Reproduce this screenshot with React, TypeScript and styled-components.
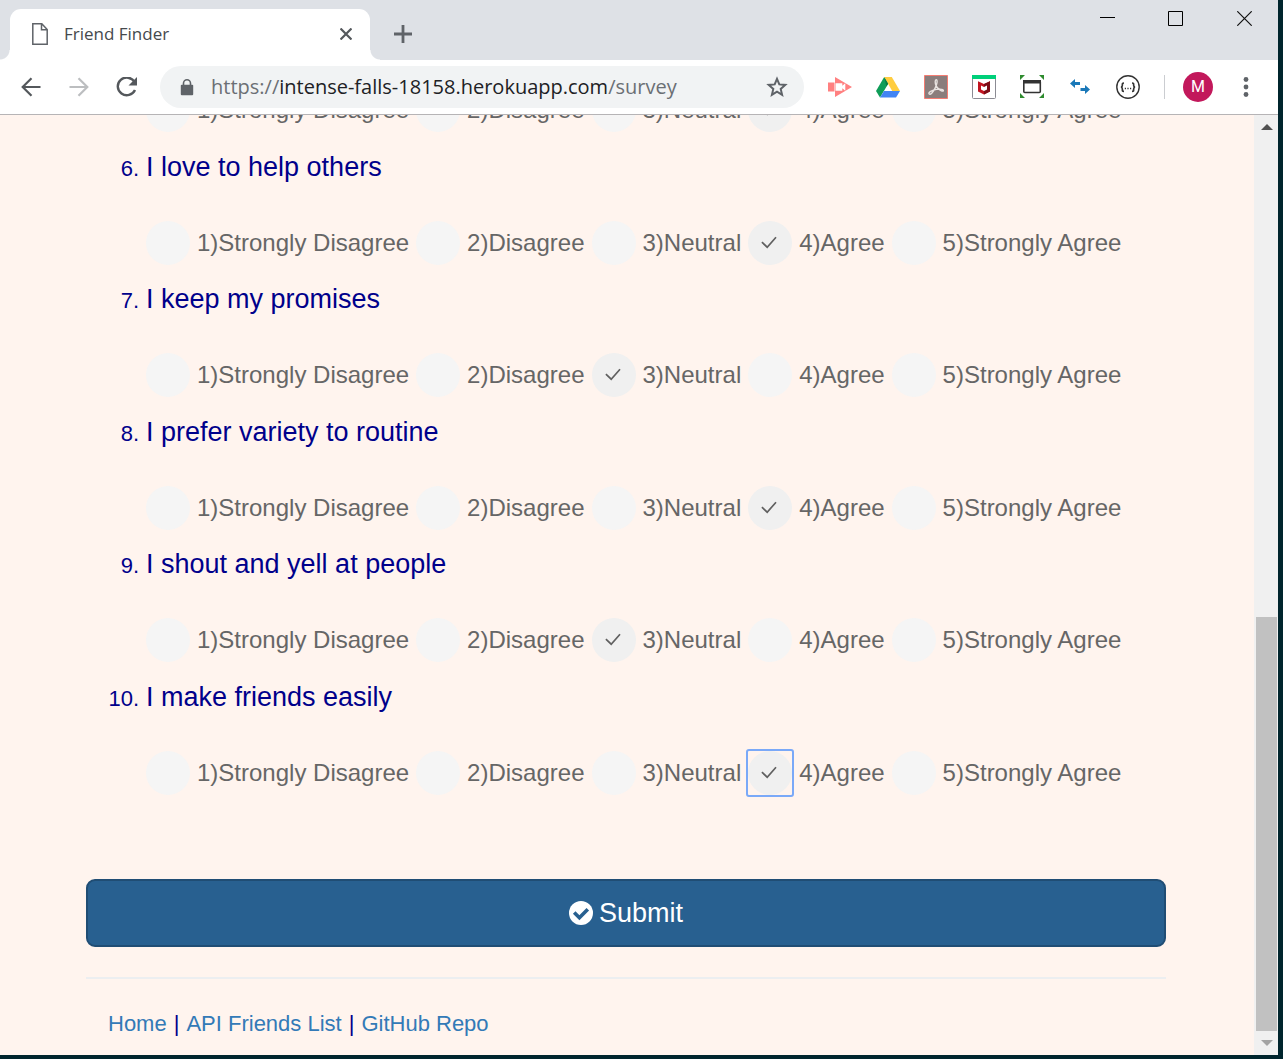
import React from "react";
import styled, { createGlobalStyle } from "styled-components";

const GlobalStyle = createGlobalStyle`
  * { box-sizing: border-box; }
  body { margin: 0; background: #00252d; }
  button { font: inherit; border: 0; padding: 0; background: none; cursor: pointer; }
  svg { display: block; }
`;

const uiFont = `"Open Sans", "Noto Sans", sans-serif`;
const pageFont = `"Liberation Sans", Arial, sans-serif`;

const BrowserWindow = styled.div`
  display: flex;
  flex-direction: column;
  height: 100vh;
  border-right: 5px solid #00252d;
  border-bottom: 4px solid #00252d;
  background: #fff;
`;

const TabStrip = styled.header`
  display: flex;
  flex: none;
  height: 60px;
  padding-left: 10px;
  background: #dee1e6;
`;

const Tab = styled.div`
  position: relative;
  display: flex;
  align-items: center;
  align-self: flex-end;
  width: 360px;
  height: 51px;
  padding: 0 14px 2px 22px;
  border-radius: 11px 11px 0 0;
  background: #fff;

  &::before,
  &::after {
    content: "";
    position: absolute;
    bottom: 0;
    width: 10px;
    height: 10px;
  }
  &::before {
    right: 100%;
    background: radial-gradient(circle at 0 0, #dee1e6 9px, #fff 10px);
  }
  &::after {
    left: 100%;
    background: radial-gradient(circle at 100% 0, #dee1e6 9px, #fff 10px);
  }
`;

const TabTitle = styled.span`
  flex: 1;
  padding-left: 16px;
  font: 17px/24px ${uiFont};
  color: #45494d;
`;

const IconButton = styled.button<{ $width?: number }>`
  display: flex;
  flex: none;
  align-items: center;
  justify-content: center;
  width: ${(p) => p.$width ?? 48}px;
`;

const NewTab = styled(IconButton)`
  margin: 8px 0 0 9px;
`;

const WindowControls = styled.div`
  display: flex;
  height: 37px;
  margin-left: auto;
`;

const Toolbar = styled.nav`
  display: flex;
  flex: none;
  height: 55px;
  padding: 0 8px 0 7px;
  border-bottom: 1px solid #b6b4b6;
  background: #fff;
`;

const AddressBar = styled.div`
  display: flex;
  flex: 1;
  align-items: center;
  align-self: center;
  min-width: 0;
  height: 42px;
  margin: 0 12px 0 9px;
  padding: 0 16px 0 20px;
  border-radius: 21px;
  background: #f1f3f4;
`;

const Address = styled.span`
  flex: 1;
  min-width: 0;
  overflow: hidden;
  padding-left: 17px;
  white-space: nowrap;
  font: 20px/30px ${uiFont};
  color: #6b6f74;
`;

const Host = styled.span`
  color: #202124;
`;

const Divider = styled.span`
  align-self: center;
  width: 1px;
  height: 24px;
  margin: 0 9px 0 12px;
  background: #cbcdd1;
`;

const Avatar = styled.span`
  width: 30px;
  height: 30px;
  border-radius: 50%;
  background: #c2185b;
  color: #fff;
  font: 16px/30px Roboto, sans-serif;
  text-align: center;
`;

const Viewport = styled.div`
  display: flex;
  flex: 1;
  min-height: 0;
  background: #fff4ee;
`;

const Page = styled.main`
  display: flex;
  flex: 1;
  flex-direction: column;
  justify-content: flex-end;
  min-width: 0;
  overflow: hidden;
  padding: 0 88px 15px 86px;
  font-family: ${pageFont};
`;

const Survey = styled.form`
  display: flex;
  flex: none;
  flex-direction: column;
`;

const QuestionList = styled.ol`
  margin: 0 0 69px;
  padding: 0;
  list-style: none;
`;

const Question = styled.li`
  padding-bottom: 15px;

  &:nth-child(odd) {
    padding-bottom: 16px;
  }
`;

const QuestionHead = styled.div`
  display: flex;
  align-items: baseline;
  height: 38px;
  margin-bottom: 35px;
  line-height: 38px;
  color: #00008b;
`;

const QuestionNumber = styled.span`
  width: 53px;
  margin-right: 7px;
  text-align: right;
  font-size: 22px;
`;

const QuestionText = styled.span`
  font-size: 27px;
`;

const Options = styled.div`
  display: flex;
  gap: 7px;
  height: 44px;
  padding-left: 60px;
`;

const Option = styled.label`
  display: flex;
  align-items: center;
  gap: 7px;
  white-space: nowrap;
  font-size: 24px;
  line-height: 44px;
  color: #666;
`;

const RadioBox = styled.span`
  display: grid;
  place-items: center;
  border-radius: 1px;

  &:focus-within {
    outline: 2px solid #7aa9f8;
  }
  & > * {
    grid-area: 1 / 1;
  }
  & > svg {
    visibility: hidden;
    pointer-events: none;
  }
  & > input:checked + svg {
    visibility: visible;
  }
`;

const Radio = styled.input`
  appearance: none;
  width: 44px;
  height: 44px;
  margin: 0;
  border-radius: 50%;
  outline: 0;
  background: #f5f5f5;

  &:checked {
    background: #f0f0f0;
  }
`;

const SubmitButton = styled.button`
  display: flex;
  align-items: center;
  justify-content: center;
  gap: 6px;
  height: 68px;
  border: 2px solid #204d74;
  border-radius: 9px;
  background: #286090;
  color: #fff;
  font-size: 27px;
  line-height: 36px;
`;

const Rule = styled.hr`
  flex: none;
  width: 100%;
  height: 2px;
  margin: 30px 0 29px;
  border: 0;
  background: #eceef0;
`;

const Footer = styled.footer`
  display: flex;
  flex: none;
  gap: 7px;
  padding-left: 22px;
  font-size: 22px;
  line-height: 32px;
  color: #00008b;
`;

const FooterLink = styled.a`
  color: #337ab7;
  text-decoration: none;
`;

const ScrollBar = styled.div`
  display: flex;
  flex: none;
  flex-direction: column;
  width: 24px;
  padding: 0 1px 0 2px;
  background: #f0f0f0;
`;

const ScrollSpace = styled.span`
  flex: 478;
`;

const ScrollThumb = styled.span`
  flex: 414;
  background: #c1c1c1;
`;

const ScrollArrow = styled(IconButton)`
  height: 24px;
`;

type Item = { number: number; text?: string; answer: number; focused?: boolean };

const items: Item[] = [
  { number: 5, answer: 4 },
  { number: 6, text: "I love to help others", answer: 4 },
  { number: 7, text: "I keep my promises", answer: 3 },
  { number: 8, text: "I prefer variety to routine", answer: 4 },
  { number: 9, text: "I shout and yell at people", answer: 3 },
  { number: 10, text: "I make friends easily", answer: 4, focused: true },
];

const choices = ["Strongly Disagree", "Disagree", "Neutral", "Agree", "Strongly Agree"];

const CheckMark = () => (
  <svg width="18" height="16" viewBox="0 0 18 16" fill="none" stroke="#606060" strokeWidth="1.7">
    <path d="M.9 7.200 6.200 12.200 15 2.200" />
  </svg>
);

const SurveyQuestion = ({ number, text, answer, focused }: Item) => (
  <Question>
    {text && (
      <QuestionHead>
        <QuestionNumber>{number}.</QuestionNumber>
        <QuestionText>{text}</QuestionText>
      </QuestionHead>
    )}
    <Options role="radiogroup" aria-label={text}>
      {choices.map((choice, i) => (
        <Option key={choice}>
          <RadioBox>
            <Radio
              type="radio"
              name={`q${number}`}
              value={i + 1}
              defaultChecked={answer === i + 1}
              autoFocus={focused && answer === i + 1}
            />
            <CheckMark />
          </RadioBox>
          {`${i + 1})${choice}`}
        </Option>
      ))}
    </Options>
  </Question>
);

const extensions = [
  {
    label: "Screen recorder",
    icon: (
      <svg width="24" height="24" viewBox="0 0 24 24">
        <path d="M0 7.500h6.500v9H0zM7 2l17 10L7 22z" fill="#ff8080" />
        <path d="M7.500 8.200h6.800v2.600l3-2.600v7.600l-3-2.600v2.600H7.500z" fill="#fff" />
      </svg>
    ),
  },
  {
    label: "Google Drive",
    icon: (
      <svg width="24" height="24" viewBox="0 0 24 24">
        <path d="M8.200 2 0 16l4 6.500L12.200 8.800z" fill="#0f9d58" />
        <path d="M8.200 2h7.600L24 16h-7.800z" fill="#ffcd40" />
        <path d="M8 16h16l-4 6.500H4z" fill="#4285f4" />
        <path d="m8.200 2 4 6.800-1.800 2.800z" fill="#0a7d43" />
      </svg>
    ),
  },
  {
    label: "Adobe Acrobat",
    icon: (
      <svg width="24" height="24" viewBox="0 0 24 24" fill="none">
        <path d="M.5.5h23v23H.5z" fill="#8a7d7c" stroke="#f47c72" />
        <path
          d="M5.200 19c-1.500-1.500 3-4 7.500-4.600 4-.6 7.300.1 6.600 1.400-.8 1.400-6-2-7.300-5.200-1-2.500-1.200-5.800.2-5.800 1.700 0 .8 4.500-1.200 8.600C9.200 17 6.500 20.200 5.200 19z"
          stroke="#e8e2e0"
          strokeWidth="1.400"
        />
      </svg>
    ),
  },
  {
    label: "McAfee WebAdvisor",
    icon: (
      <svg width="24" height="24" viewBox="0 0 24 24">
        <rect x=".5" y=".5" width="23" height="23" rx="1" fill="#fff" stroke="#8b8b93" />
        <path d="M0 0h24v4H0z" fill="#00d07a" />
        <path d="M6 6.200 12 9l6-2.800v10.300l-6 3-6-3z" fill="#c01420" />
        <path d="m12 9 6-2.800v10.300l-6 3z" fill="#7d0c16" />
        <path d="M9 10.600 12 12l3-1.400v4l-3 1.500-3-1.500z" fill="#fff" />
      </svg>
    ),
  },
  {
    label: "Window resizer",
    icon: (
      <svg width="24" height="24" viewBox="0 0 24 24">
        <path d="M0 0h5L0 5zM24 0v5l-5-5zM0 23v-5l5 5zM24 23h-5l5-5z" fill="#2e8b2e" />
        <rect x="3.800" y="6" width="16.500" height="11.500" rx="1" fill="#fff" stroke="#333" strokeWidth="1.600" />
        <path d="M3 5h18v3.500H3z" fill="#333" />
      </svg>
    ),
  },
  {
    label: "Switch",
    icon: (
      <svg width="20" height="20" viewBox="0 0 20 20" fill="#1a78b8">
        <path d="M0 6.500 5 2v3h5v3H5v3zM20 12.500 15 8v3h-4.500v3H15v3z" />
      </svg>
    ),
  },
  {
    label: "JSON viewer",
    icon: (
      <svg width="24" height="24" viewBox="0 0 24 24" fill="none" stroke="#333" strokeWidth="1.400">
        <circle cx="12" cy="12" r="11.200" />
        <path d="M8 8c-2 0-1.600.8-1.600 2.100S6.200 12 5 12.200c1.200.2 1.400.7 1.400 2S6 16.400 8 16.400M16 8c2 0 1.600.8 1.600 2.100s.2 1.900 1.400 2.100c-1.200.2-1.400.7-1.400 2s.4 2.200-1.600 2.200" strokeWidth="1.700" />
        <path d="M8.800 13.500h1.200M11.400 13.500h1.200M14 13.500h1.200" />
      </svg>
    ),
  },
];

export default function App() {
  return (
    <BrowserWindow>
      <GlobalStyle />
      <TabStrip>
        <Tab>
          <svg width="16" height="22" viewBox="0 0 16 22" fill="none" stroke="#5f6368" strokeWidth="1.500">
            <path d="M.8.8h9L15.200 6.500v14.700H.8zM9.500.8v6h5.700" />
          </svg>
          <TabTitle>Friend Finder</TabTitle>
          <IconButton $width={20} aria-label="Close tab">
            <svg width="12" height="12" viewBox="0 0 12 12" stroke="#54585c" strokeWidth="2.200">
              <path d="m.5.5 11 11m0-11-11 11" />
            </svg>
          </IconButton>
        </Tab>
        <NewTab aria-label="New tab">
          <svg width="18" height="18" viewBox="0 0 18 18" stroke="#5f6368" strokeWidth="2.800">
            <path d="M9 0v18M0 9h18" />
          </svg>
        </NewTab>
        <WindowControls>
          <IconButton $width={68} aria-label="Minimize">
            <svg width="15" height="15" viewBox="0 0 15 15" stroke="#000">
              <path d="M0 6.500h15" />
            </svg>
          </IconButton>
          <IconButton $width={69} aria-label="Maximize">
            <svg width="15" height="15" viewBox="0 0 15 15" stroke="#000" fill="none">
              <path d="M.5.5h14v14H.5z" />
            </svg>
          </IconButton>
          <IconButton $width={68} aria-label="Close">
            <svg width="15" height="15" viewBox="0 0 15 15" stroke="#111" strokeWidth="1.200">
              <path d="m.3.3 14.400 14.400m0-14.400L.3 14.700" />
            </svg>
          </IconButton>
        </WindowControls>
      </TabStrip>

      <Toolbar>
        <IconButton aria-label="Back">
          <svg width="20" height="20" viewBox="0 0 20 20" fill="none" stroke="#54585c" strokeWidth="2.200">
            <path d="M19.500 10H1.800M10.500 1.200 1.700 10l8.800 8.800" />
          </svg>
        </IconButton>
        <IconButton aria-label="Forward">
          <svg width="20" height="20" viewBox="0 0 20 20" fill="none" stroke="#bcbec0" strokeWidth="2.200">
            <path d="M.5 10h17.700M9.500 1.200 18.300 10l-8.800 8.800" />
          </svg>
        </IconButton>
        <IconButton aria-label="Reload">
          <svg width="22" height="20" viewBox="0 0 22 20" fill="none" stroke="#54585c" strokeWidth="2.400">
            <path d="M18.600 5A9 8.800 0 1 0 19 13" />
            <path d="M21 0v8.500h-8.500z" fill="#54585c" stroke="none" />
          </svg>
        </IconButton>
        <AddressBar>
          <svg width="14" height="17" viewBox="0 0 14 17" fill="none">
            <path d="M3.500 7V4.300a3.500 3.500 0 0 1 7 0V7" stroke="#5f6368" strokeWidth="1.600" />
            <rect x=".8" y="5.800" width="12.400" height="10.400" rx="1" fill="#5f6368" />
          </svg>
          <Address>
            https://<Host>intense-falls-18158.herokuapp.com</Host>/survey
          </Address>
          <IconButton $width={22} aria-label="Bookmark this page">
            <svg width="22" height="22" viewBox="0 0 22 22" fill="none" stroke="#5f6368" strokeWidth="2">
              <path d="m11 2.800 2.300 5.600 6 .5-4.600 4 1.400 5.900-5.100-3.100-5.100 3.100 1.400-5.900-4.600-4 6-.5z" />
            </svg>
          </IconButton>
        </AddressBar>
        {extensions.map(({ label, icon }) => (
          <IconButton key={label} aria-label={label}>
            {icon}
          </IconButton>
        ))}
        <Divider />
        <IconButton aria-label="Profile">
          <Avatar>M</Avatar>
        </IconButton>
        <IconButton aria-label="Menu">
          <svg width="6" height="20" viewBox="0 0 6 20" fill="#5f6368">
            <circle cx="3" cy="2.500" r="2.400" />
            <circle cx="3" cy="10" r="2.400" />
            <circle cx="3" cy="17.500" r="2.400" />
          </svg>
        </IconButton>
      </Toolbar>

      <Viewport>
        <Page>
          <Survey onSubmit={(e) => e.preventDefault()}>
            <QuestionList>
              {items.map((item) => (
                <SurveyQuestion key={item.number} {...item} />
              ))}
            </QuestionList>
            <SubmitButton type="submit">
              <svg width="24" height="24" viewBox="0 0 24 24" fill="none">
                <circle cx="12" cy="12" r="12" fill="#fff" />
                <path d="m5.200 11.500 5.200 5.200 8.400-8.400" stroke="#286090" strokeWidth="3.600" />
              </svg>
              Submit
            </SubmitButton>
          </Survey>
          <Rule />
          <Footer>
            <FooterLink href="/">Home</FooterLink>|
            <FooterLink href="/api/friends">API Friends List</FooterLink>|
            <FooterLink href="https://github.com">GitHub Repo</FooterLink>
          </Footer>
        </Page>
        <ScrollBar>
          <ScrollArrow $width={21} aria-label="Scroll up">
            <svg width="12" height="6" viewBox="0 0 12 6" fill="#505050">
              <path d="M0 6 6 0l6 6z" />
            </svg>
          </ScrollArrow>
          <ScrollSpace />
          <ScrollThumb />
          <ScrollArrow $width={21} aria-label="Scroll down">
            <svg width="12" height="6" viewBox="0 0 12 6" fill="#a3a3a3">
              <path d="m0 0 6 6 6-6z" />
            </svg>
          </ScrollArrow>
        </ScrollBar>
      </Viewport>
    </BrowserWindow>
  );
}
